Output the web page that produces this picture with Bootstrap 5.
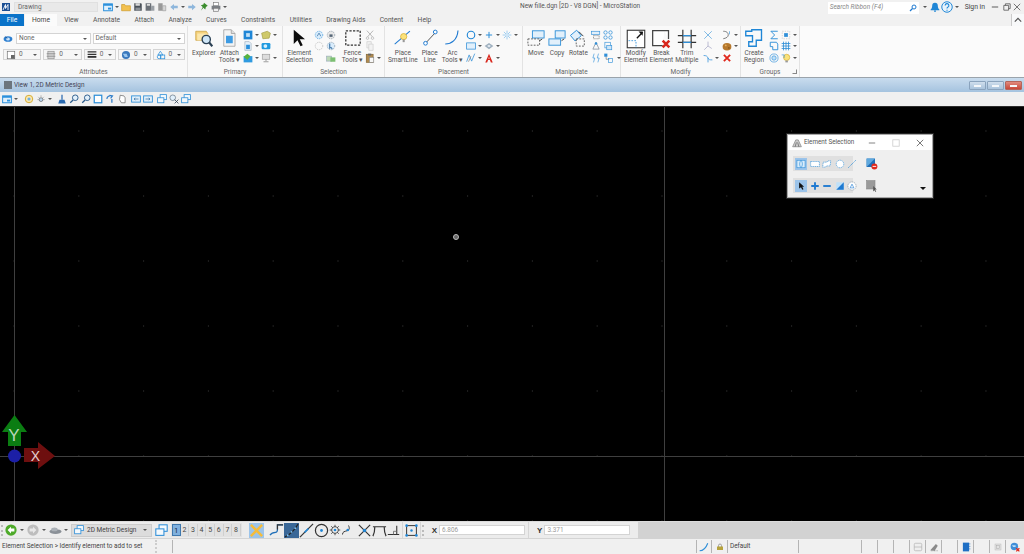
<!DOCTYPE html>
<html lang="en">
<head>
<meta charset="UTF-8" />
<title>New fille.dgn [2D - V8 DGN] - MicroStation</title>
<link href="https://cdn.jsdelivr.net/npm/bootstrap@5.3.0/dist/css/bootstrap.min.css" rel="stylesheet" />
<style>
  html, body { height: 554px; overflow: hidden; }
  body { width: 1024px; background: #000; font-family: Roboto, "Liberation Sans", sans-serif; font-size: 6.5px; line-height: 7px; color: #555; }
  svg { display: block; flex: none; }
  .ic { width: 10px; height: 10px; }
  .ic8 { width: 8px; height: 8px; }
  .ic12 { width: 12px; height: 12px; }
  .ic13 { width: 13px; height: 13px; }
  .ic15 { width: 15px; height: 15px; }
  .ic18 { width: 18px; height: 18px; }
  .ic20 { width: 20px; height: 20px; }
  .car { width: 0; height: 0; flex: none; border-left: 2px solid transparent; border-right: 2px solid transparent; border-top: 2.5px solid #555; }
  .gl-1 { margin-left: 1px; }
  .gl-2 { margin-left: 2px; }
  .gl-3 { margin-left: 3px; }
  .gl-4 { margin-left: 4px; }
  .gl-6 { margin-left: 6px; }

  /* title bar */
  .app-title { height: 14px; background: #f1f1f1; }
  .logo-ic { margin-left: 2px; }
  .qat-combo { width: 84px; height: 10px; margin: 0 5px 0 4px; padding: 0 3px; background: #e9e9e9; border: 1px solid #e0e0e0; color: #666; }
  .qat-gap { gap: 2px; }
  .doc-name { left: 520px; top: 2px; font-size: 6.5px; line-height: 9px; color: #555; }
  .search-box { width: 91px; height: 12px; margin-top: 1px; padding: 0 2px; background: #fff; color: #888; font-style: italic; }
  .signin { font-size: 6.8px; color: #444; }
  .title-end { margin-right: 3px; }

  /* ribbon tabs */
  .tab-row { height: 12px; background: #f1f1f1; padding: 0; border: 0; flex-wrap: nowrap; }
  .tab-row .nav-link { padding: 0 7.2px; margin: 0; height: 12px; border: 0; border-radius: 0; font-size: 6.7px; line-height: 12px; color: #555; background: none; }
  .tab-row .nav-link.active { background: #fbfbfb; color: #444; padding: 0 7px; margin-left: 1px; }
  .tab-row .nav-link.tab-file { background: #0a73c9; color: #fff; width: 24px; padding: 0; text-align: center; }
  .ribbon-up { width: 13px; height: 12px; border-left: 1px solid #ccc; }

  /* ribbon */
  .ribbon { height: 52px; background: #fbfbfb; border-bottom: 1px solid #9aa3ab; }
  .rb-group { height: 51px; background: #f9f9f9; border-right: 1px solid #e3e3e3; }
  .rb-body { height: 42px; }
  .rb-name { height: 9px; line-height: 8px; text-align: center; color: #666; position: relative; }
  .g-attr { width: 187px; padding: 7px 2px 0 3px; }
  .g-prim { width: 94px; padding-left: 4px; gap: 3px; }
  .g-sel { width: 101px; padding-left: 3px; }
  .g-place { width: 137px; padding-left: 3px; gap: 3px; }
  .g-manip { width: 97px; padding-left: 4px; gap: 3px; }
  .g-mod { width: 119px; padding-left: 3px; gap: 2px; }
  .g-grp { width: 58px; padding-left: 3px; gap: 5px; }
  .big-btn { text-align: center; white-space: nowrap; color: #555; }
  .big-ico { height: 24px; padding-top: 3px; display: flex; justify-content: center; }
  .mg { display: grid; grid-auto-flow: column; grid-template-rows: repeat(3, 11.5px); column-gap: 2px; padding-top: 3px; align-items: center; height: 38px; }
  .cell { display: flex; align-items: center; gap: 2px; }
  .combo { height: 11px; padding: 0 3px 0 2px; background: #fff; border: 1px solid #d4d4d4; color: #666; display: flex; align-items: center; justify-content: space-between; }
  .c-none { width: 75px; margin-left: 3px; }
  .c-default { width: 93px; margin-left: 2px; }
  .attr-row2 { margin-top: 5px; gap: 2px; }
  .c-sm { width: 39px; gap: 3px; justify-content: flex-start; background: #f6f6f6; }
  .c-nr { width: 33px; }
  .c-sm .car { margin-left: auto; }
  .launcher { position: absolute; right: 2px; top: 1px; width: 5px; height: 5px; border: 1px solid #888; border-top-color: transparent; border-left-color: transparent; }

  /* view window */
  .view-title { height: 14px; background: linear-gradient(#c9dcee, #a5c3df); color: #445; }
  .view-title .view-name { font-size: 6.4px; }
  .win-btns { margin-right: 1px; }
  .win-btn { width: 17px; height: 9px; margin-right: 1px; border: 1px solid #8aa3bd; border-radius: 1px; background: linear-gradient(#cfdeed, #a9c3dc); }
  .win-btn.win-x { background: linear-gradient(#e08a7e, #c8483a); border-color: #b5665c; }
  .win-btn i { display: block; width: 7px; height: 2px; margin: 3px auto 0; background: #f4f7fa; border: 0; }
  .view-bar { height: 14px; background: #f0f0f0; padding-left: 2px; gap: 2px; }
  .canvas-area {
    height: 415px; position: relative; background-color: #000; border-top: 1px solid #2c2c2c;
    background-image: radial-gradient(circle, #3d3d3d .6px, transparent 1px);
    background-size: 64.8px 65px; background-position: -18.4px -8.5px;
  }
  .cross-v { position: absolute; top: 0; bottom: 0; width: 1px; background: #3f3f3f; }
  .cross-h { position: absolute; left: 0; right: 0; top: 349px; height: 1px; background: #3f3f3f; }
  .cv-a { left: 14px; }
  .cv-b { left: 664px; }
  .cursor-dot { position: absolute; left: 453px; top: 127px; width: 6px; height: 6px; border-radius: 50%; background: #666; border: 1px solid #bbb; }
  .triad { position: absolute; left: 0; top: 307px; width: 60px; height: 66px; }

  /* element selection dialog */
  .sel-dialog { position: absolute; left: 787px; top: 27px; width: 146px; height: 64px; background: #efefef; border: 1px solid #a8a8a8; box-shadow: 0 0 0 1px #222; }
  .sel-head { height: 15px; background: #fff; padding: 0 8px 0 4px; color: #555; }
  .sel-name { font-size: 6.3px; }
  .sel-strip { width: 60px; height: 15px; padding: 0 2px; gap: 2.5px; background: #e0e0e0; }
  .sel-on { background: #9cc4ea; padding: 1px; }
  .sel-rows { padding: 6px 0 0 5px; }
  .sel-row { height: 15px; margin-bottom: 7px; position: relative; }
  .sel-side { margin-left: 13px; }
  .sel-drop { position: absolute; right: 6px; top: 9px; border-left-width: 3px; border-right-width: 3px; border-top: 3px solid #111; }

  /* bottom bars */
  .tool-bar { height: 18px; background: #ececec; border-top: 1px solid #dcdcdc; border-bottom: 1px solid #d4d4d4; }
  .view-combo { width: 81px; height: 13px; margin-left: 3px; padding: 0 4px 0 2px; background: #dcdcdc; border: 1px solid #ccc; color: #444; gap: 3px; }
  .view-nums { height: 14px; background: #e2e2e2; margin: 0 7px 0 3px; padding: 0 1px; }
  .view-num { width: 8.6px; height: 12px; line-height: 12px; font-size: 7px; text-align: center; color: #444; border-right: 1px solid #cfcfcf; }
  .view-num.on { background: #7fb0de; border: 1px solid #3f78ad; color: #123; }
  .snap-x { background: #9cc4ea; padding: 0; height: 15px; margin-right: 5px; }
  .snap-on { background: #3a6797; padding: 0; height: 15px; }
  .tb-sep { width: 1px; height: 16px; background: #d6d6d6; }
  .grip { width: 2px; height: 11px; margin: 0 2px 0 1px; border-left: 2px dotted #bbb; }
  .coord-label { font-size: 8px; font-weight: 700; color: #333; font-family: "Liberation Sans", sans-serif; }
  .coord-input.form-control { width: 86px; height: 10px; min-height: 0; margin-left: 2px; padding: 0 2px; border: 1px solid #d4d4d4; border-radius: 0; background: #fff; font-size: 6.4px; line-height: 8px; color: #999; box-shadow: none; }
  .tb-rest { flex: 1 1 0; height: 17px; background: #d2d2d2; }
  .status-bar { height: 15px; background: #f0f0f0; color: #444; font-size: 6.4px; }
  .st-cell { height: 13px; border-right: 1px solid #b4b4b4; display: flex; align-items: center; justify-content: center; flex: none; }
  .st-msg { width: 157px; padding-left: 2px; justify-content: flex-start; border-right: 2px dotted #ccc; }
  .st-16 { width: 16px; }
  .st-15 { width: 15px; }
  .st-wide { width: 524px; }
  .st-def { width: 71px; padding-left: 2px; justify-content: flex-start; }
  .st-63 { width: 63px; }
</style>
</head>
<body class="d-flex flex-column">

<svg width="0" height="0" class="position-absolute">
  <defs>
    <symbol id="logo" viewBox="0 0 16 16"><rect width="16" height="16" fill="#1c4f93"/><path d="M2 14 7 3v8l5-8v11" fill="none" stroke="#fff" stroke-width="1.8"/></symbol>
    <symbol id="view" viewBox="0 0 16 16"><rect x="1" y="3" width="14" height="11" fill="#dff0fd" stroke="#2b90dc" stroke-width="1.6"/><rect x="1" y="3" width="14" height="3" fill="#2b90dc"/><rect x="8" y="9" width="5" height="3" fill="#2b90dc"/></symbol>
    <symbol id="folder" viewBox="0 0 16 16"><path d="M1 4h5l1 2h8v8H1z" fill="#f2c04f" stroke="#c99422"/></symbol>
    <symbol id="disk" viewBox="0 0 16 16"><path d="M2 2h11l1 1v11H2z" fill="#4a5058"/><rect x="4" y="2" width="7" height="4" fill="#d8d8d8"/><rect x="4" y="9" width="8" height="5" fill="#8b9096"/></symbol>
    <symbol id="disk2" viewBox="0 0 16 16"><path d="M1 2h9v12H1z" fill="#6b7077"/><rect x="3" y="3" width="5" height="3" fill="#ddd"/><path d="M10 6h5v8h-6" fill="#9ba0a6"/></symbol>
    <symbol id="disk3" viewBox="0 0 16 16"><path d="M2 2h7v12H2z" fill="#999"/><path d="M9 6h5v8H9z" fill="#d5d5d5" stroke="#999"/></symbol>
    <symbol id="back" viewBox="0 0 16 16"><path d="M8 3 2 8l6 5v-3h6V6H8z" fill="#8fb7dc"/></symbol>
    <symbol id="fwd" viewBox="0 0 16 16"><path d="m8 3 6 5-6 5v-3H2V6h6z" fill="#8fb7dc"/></symbol>
    <symbol id="pin" viewBox="0 0 16 16"><path d="M8 1l6 5-3 2-1 4-3-3-4 5 3-6-3-3 4-1z" fill="#3b8d2d"/></symbol>
    <symbol id="printer" viewBox="0 0 16 16"><rect x="4" y="1" width="8" height="5" fill="#fff" stroke="#777"/><rect x="1" y="6" width="14" height="6" fill="#7b7f84"/><rect x="4" y="10" width="8" height="5" fill="#eee" stroke="#777"/></symbol>
    <symbol id="search" viewBox="0 0 16 16"><circle cx="10" cy="6" r="4" fill="none" stroke="#1f7ad1" stroke-width="2"/><path d="M7 9l-5 5" stroke="#1f7ad1" stroke-width="2.4"/></symbol>
    <symbol id="bell" viewBox="0 0 16 16"><path d="M8 1c3 0 4.500 2 4.500 5s1 5 2.500 6v1H1v-1c1.500-1 2.500-3 2.500-6S5 1 8 1z" fill="#1f86d6"/><circle cx="8" cy="14.500" r="1.500" fill="#1f86d6"/></symbol>
    <symbol id="layers" viewBox="0 0 16 16"><ellipse cx="8" cy="8" rx="7" ry="4.500" fill="#2d7fd0"/><ellipse cx="8" cy="8" rx="3" ry="2.500" fill="#cfe6fb"/><path d="M3 4l4 3" stroke="#173e70"/></symbol>
    <symbol id="lvl1" viewBox="0 0 16 16"><rect x="2" y="2" width="12" height="12" fill="#fff" stroke="#666"/><rect x="8" y="8" width="6" height="6" fill="#666"/></symbol>
    <symbol id="lvl2" viewBox="0 0 16 16"><rect x="3" y="2" width="10" height="12" fill="#d4d4d4" stroke="#888"/><path d="M1 6h14M1 10h14" stroke="#777"/></symbol>
    <symbol id="lvl3" viewBox="0 0 16 16"><path d="M1 3h14M1 7h14" stroke="#333" stroke-width="2"/><path d="M1 11h14" stroke="#333" stroke-width="3"/></symbol>
    <symbol id="lvl4" viewBox="0 0 16 16"><circle cx="8" cy="8" r="6.500" fill="#3a78bd"/><path d="M3 6h6l2 5H6z" fill="#9cc7ee"/></symbol>
    <symbol id="lvl5" viewBox="0 0 16 16"><path d="M7 2l4 6H3z" fill="none" stroke="#2b90dc" stroke-width="1.2"/><rect x="7" y="8" width="7" height="6" fill="none" stroke="#2b90dc" stroke-width="1.2"/><circle cx="5" cy="11" r="3" fill="none" stroke="#2b90dc" stroke-width="1.2"/></symbol>
    <symbol id="explorer" viewBox="0 0 24 24"><path d="M1 3h14l2 3v9H1z" fill="#f5d27c" stroke="#c9a042"/><path d="M3 6h14v9H3z" fill="#fbe7ae"/><circle cx="15" cy="14" r="5.500" fill="#cfe6f7" stroke="#2a4054" stroke-width="1.8"/><path d="m19 18 4 5" stroke="#2a4054" stroke-width="2.8"/></symbol>
    <symbol id="attach" viewBox="0 0 20 24"><path d="M3 1h10l5 5v17H3z" fill="#f4f4f4" stroke="#9a9a9a"/><path d="M13 1v5h5" fill="#ddd" stroke="#9a9a9a"/><path d="M6 9h9v10H6z" fill="#3d9be3"/></symbol>
    <symbol id="m-ref" viewBox="0 0 16 16"><rect x="1" y="1" width="14" height="14" fill="#1f86d6"/><rect x="5" y="5" width="6" height="6" fill="#bfe0f8"/></symbol>
    <symbol id="m-raster" viewBox="0 0 16 16"><path d="M1 5l9-3 5 3-2 8-10 1z" fill="#cfc96a" stroke="#9f9a42"/></symbol>
    <symbol id="m-doc" viewBox="0 0 16 16"><path d="M3 1h7l3 3v11H3z" fill="#e7f2fb" stroke="#9ab"/><rect x="5" y="6" width="6" height="7" fill="#2b90dc"/></symbol>
    <symbol id="m-cloud" viewBox="0 0 16 16"><rect x="1" y="3" width="14" height="10" rx="2" fill="#1f9ae0"/><circle cx="7" cy="8" r="3" fill="#d7effc"/></symbol>
    <symbol id="m-img" viewBox="0 0 16 16"><rect x="1" y="5" width="14" height="10" fill="#2f9ae0"/><path d="M1 6l6-5 5 4-5 6z" fill="#58b33f"/></symbol>
    <symbol id="m-grey" viewBox="0 0 16 16"><rect x="2" y="2" width="12" height="8" fill="#ddd" stroke="#999"/><path d="M8 10v3M4 14h8" stroke="#999" stroke-width="1.500"/></symbol>
    <symbol id="arrow" viewBox="0 0 24 24"><path d="M5 1v19l5-5 4 8 3-1.500-4-8h7z" fill="#0c0c0c"/></symbol>
    <symbol id="c-dash" viewBox="0 0 16 16"><circle cx="8" cy="8" r="6" fill="#d9ecfb" stroke="#2b90dc" stroke-dasharray="2 1.500"/><path d="M5 10l3-5 3 5" fill="none" stroke="#1b5b93"/></symbol>
    <symbol id="c-lock" viewBox="0 0 16 16"><circle cx="8" cy="8" r="6" fill="#e8e8e8" stroke="#789" stroke-dasharray="2 1.500"/><rect x="5.500" y="7" width="5" height="4" fill="#567"/></symbol>
    <symbol id="c-plain" viewBox="0 0 16 16"><circle cx="8" cy="8" r="6" fill="none" stroke="#aaa" stroke-dasharray="2 1.500"/></symbol>
    <symbol id="c-sel" viewBox="0 0 16 16"><circle cx="8" cy="8" r="6" fill="#d9ecfb" stroke="#789" stroke-dasharray="2 1.500"/><path d="M6 4v8l2-2 2 3" fill="none" stroke="#1b5b93" stroke-width="1.500"/></symbol>
    <symbol id="c-green" viewBox="0 0 16 16"><rect x="1" y="5" width="8" height="8" fill="#bcd8b5" stroke="#9ab"/><rect x="7" y="7" width="8" height="7" fill="#7cbf72"/></symbol>
    <symbol id="fence" viewBox="0 0 20 20"><rect x="2" y="2" width="16" height="16" fill="none" stroke="#333" stroke-width="1.400" stroke-dasharray="2.500 1.500"/></symbol>
    <symbol id="cut" viewBox="0 0 16 16"><path d="M3 1l9 10M13 1 4 11" stroke="#aaa" stroke-width="1.300"/><circle cx="4" cy="13" r="2" fill="none" stroke="#aaa"/><circle cx="12" cy="13" r="2" fill="none" stroke="#aaa"/></symbol>
    <symbol id="copydoc" viewBox="0 0 16 16"><path d="M3 1h7v10H3z" fill="#f2f2f2" stroke="#ccc"/><path d="M6 5h7v10H6z" fill="#f2f2f2" stroke="#ccc"/></symbol>
    <symbol id="paste" viewBox="0 0 16 16"><rect x="2" y="2" width="11" height="13" fill="#b08b50" stroke="#7d6130"/><rect x="5" y="1" width="5" height="3" fill="#666"/><rect x="7" y="7" width="7" height="8" fill="#f7f7f7" stroke="#888"/></symbol>
    <symbol id="smartline" viewBox="0 0 26 24"><path d="M1 21 23 2" stroke="#1f7ad1" stroke-width="1.500"/><circle cx="14" cy="10" r="4.500" fill="#fbe27b" stroke="#d2a92c"/><rect x="12.500" y="14" width="3" height="4" fill="#999"/></symbol>
    <symbol id="pline" viewBox="0 0 20 24"><path d="M4 19 17 5" stroke="#555" stroke-width="1.300"/><circle cx="4" cy="19" r="2.500" fill="#fff" stroke="#1f7ad1" stroke-width="1.300"/><circle cx="17" cy="4" r="2.500" fill="#fff" stroke="#1f7ad1" stroke-width="1.300"/></symbol>
    <symbol id="parc" viewBox="0 0 20 24"><path d="M1 20c8 0 16-5 17-18" fill="none" stroke="#1f7ad1" stroke-width="1.500"/></symbol>
    <symbol id="circle" viewBox="0 0 16 16"><circle cx="8" cy="8" r="6" fill="none" stroke="#1f86d6" stroke-width="1.800"/></symbol>
    <symbol id="plus" viewBox="0 0 16 16"><path d="M8 3v10M3 8h10" stroke="#2f8fd8" stroke-width="1.600"/></symbol>
    <symbol id="spark" viewBox="0 0 16 16"><path d="M8 1v14M1 8h14M3 3l10 10M13 3 3 13" stroke="#6bb3ea"/><circle cx="8" cy="8" r="2.500" fill="#cfe6f7"/></symbol>
    <symbol id="rect" viewBox="0 0 16 16"><rect x="1" y="3" width="14" height="10" fill="#e2f0fb" stroke="#2f8fd8" stroke-width="1.200"/></symbol>
    <symbol id="hatch" viewBox="0 0 16 16"><path d="M8 3l7 5-7 5-7-5z" fill="#9fb0bf"/><path d="M8 6l3 2-3 2-3-2z" fill="#e7eef5"/></symbol>
    <symbol id="zig" viewBox="0 0 16 16"><path d="M1 14 5 3l4 10 5-12" fill="none" stroke="#2f8fd8" stroke-width="1.200"/><path d="M4 14 8 5" stroke="#777"/></symbol>
    <symbol id="bigA" viewBox="0 0 16 16"><path d="M8 1 2 15h3l1.500-4h3l1.500 4h3zM7 9l1-3 1 3z" fill="#d8261c" fill-rule="evenodd"/></symbol>
    <symbol id="move" viewBox="0 0 20 20"><rect x="6" y="2" width="13" height="8" fill="#e2f0fb" stroke="#2f8fd8"/><rect x="1" y="11" width="13" height="7" fill="none" stroke="#555" stroke-dasharray="2 1.500"/><path d="M14 13l3-2" stroke="#333"/></symbol>
    <symbol id="copy" viewBox="0 0 20 20"><rect x="8" y="2" width="11" height="8" fill="#e2f0fb" stroke="#2f8fd8"/><rect x="1" y="11" width="13" height="7" fill="#e2f0fb" stroke="#2f8fd8"/><path d="M15 13l3-2" stroke="#333"/></symbol>
    <symbol id="rotate" viewBox="0 0 20 20"><rect x="3" y="3" width="9" height="8" transform="rotate(-40 8 7)" fill="#e2f0fb" stroke="#2f8fd8"/><rect x="8" y="11" width="9" height="8" fill="none" stroke="#555" stroke-dasharray="2 1.500"/><path d="M11 3l5 5" stroke="#333"/></symbol>
    <symbol id="m-stack" viewBox="0 0 16 16"><rect x="1" y="2" width="13" height="5" fill="#e2f0fb" stroke="#2f8fd8"/><rect x="4" y="9" width="9" height="5" fill="none" stroke="#666" stroke-dasharray="2 1"/></symbol>
    <symbol id="m-four" viewBox="0 0 16 16"><g fill="none" stroke="#2f8fd8" stroke-width="1.200"><circle cx="4" cy="4" r="2.700"/><circle cx="12" cy="4" r="2.700"/><circle cx="4" cy="12" r="2.700"/><circle cx="12" cy="12" r="2.700"/></g></symbol>
    <symbol id="m-tri" viewBox="0 0 16 16"><path d="M8 2l5 11H3z" fill="none" stroke="#678"/><circle cx="8" cy="4" r="2" fill="#2f8fd8"/></symbol>
    <symbol id="m-box" viewBox="0 0 16 16"><rect x="3" y="2" width="9" height="9" fill="none" stroke="#2f8fd8"/><rect x="6" y="7" width="8" height="7" fill="#cfe6f7" stroke="#2f8fd8"/></symbol>
    <symbol id="m-wave" viewBox="0 0 16 16"><path d="M5 1 3 8l3 0-2 7M12 1l-2 7 3 0-2 7" fill="none" stroke="#2f8fd8"/></symbol>
    <symbol id="m-step" viewBox="0 0 16 16"><rect x="2" y="1" width="5" height="5" fill="#2f8fd8"/><path d="M5 6v4h5" fill="none" stroke="#666"/><rect x="9" y="9" width="6" height="6" fill="none" stroke="#2f8fd8"/></symbol>
    <symbol id="modify" viewBox="0 0 24 24"><rect x="1.500" y="1.500" width="21" height="21" fill="#fff" stroke="#333" stroke-width="1.300"/><path d="M3 14h9v9" fill="none" stroke="#2f8fd8" stroke-dasharray="2 1.500"/><path d="M13 11l7-7" stroke="#111" stroke-width="1.600"/><path d="M20 3l0 5-5-5z" fill="#111"/></symbol>
    <symbol id="break" viewBox="0 0 24 24"><path d="M16 2H2v18h12M21 12V2h-5" fill="#fff" stroke="#444" stroke-width="1.500"/><path d="M14 14l8 8M22 14l-8 8" stroke="#d8261c" stroke-width="3"/></symbol>
    <symbol id="trim" viewBox="0 0 24 24"><path d="M7 1v22M17 1v22" stroke="#333" stroke-width="1.400"/><path d="M1 8h22M1 16h22" stroke="#333" stroke-width="1.400"/><path d="M7 8h10M7 16h10" stroke="#2f8fd8" stroke-width="1.400"/></symbol>
    <symbol id="xcross" viewBox="0 0 16 16"><path d="M2 2l12 12M14 2 2 14" stroke="#5aa5de" stroke-width="1.200"/></symbol>
    <symbol id="ymerge" viewBox="0 0 16 16"><path d="M8 8 2 14M8 8l6 4M8 8V1" stroke="#99b" /></symbol>
    <symbol id="ybranch" viewBox="0 0 16 16"><path d="M1 4c4 0 6 1 7 4s3 3 7 3M8 8v7" fill="none" stroke="#2f8fd8" stroke-width="1.200"/></symbol>
    <symbol id="curvefn" viewBox="0 0 16 16"><path d="M2 2c6 0 8 3 8 6s-3 5-8 6" fill="none" stroke="#555" stroke-width="1.200"/><path d="M12 2v5" stroke="#2f8fd8"/></symbol>
    <symbol id="potato" viewBox="0 0 16 16"><ellipse cx="8" cy="9" rx="7" ry="6" fill="#b6782d"/><circle cx="6" cy="7" r="1.500" fill="#e7b25e"/><circle cx="11" cy="11" r="1.500" fill="#8a5a1f"/></symbol>
    <symbol id="redx" viewBox="0 0 16 16"><path d="M3 3l10 10M13 3 3 13" stroke="#e0281c" stroke-width="3"/></symbol>
    <symbol id="region" viewBox="0 0 24 24"><path d="M9 1h13v14h-7v8H5v-6h5V9H1V3h8z" fill="none" stroke="#1f86d6" stroke-width="1.800"/></symbol>
    <symbol id="sigma" viewBox="0 0 16 16"><path d="M14 2H3l6 6-6 6h11" fill="none" stroke="#2f8fd8" stroke-width="1.500"/></symbol>
    <symbol id="dots" viewBox="0 0 16 16"><rect x="2" y="2" width="12" height="12" fill="none" stroke="#bbb" stroke-dasharray="2 2"/><rect x="5" y="5" width="6" height="6" fill="#2f8fd8"/></symbol>
    <symbol id="s-box" viewBox="0 0 16 16"><path d="M2 2h10l2 3v9H6V9H2z" fill="none" stroke="#2f8fd8" stroke-width="1.500"/></symbol>
    <symbol id="gridb" viewBox="0 0 16 16"><path d="M4 1v14M8 1v14M12 1v14M1 4h14M1 8h14M1 12h14" stroke="#2f8fd8" stroke-width="1.300"/></symbol>
    <symbol id="target" viewBox="0 0 16 16"><circle cx="8" cy="8" r="6.500" fill="none" stroke="#2f8fd8"/><circle cx="8" cy="8" r="3.500" fill="#bfe0f8" stroke="#2f8fd8"/></symbol>
    <symbol id="bulb" viewBox="0 0 16 16"><circle cx="9" cy="7" r="5" fill="#fae27a" stroke="#d2a92c"/><rect x="7" y="12" width="4" height="3" fill="#999"/><path d="M1 3h4v5" fill="none" stroke="#2f8fd8"/></symbol>
    <symbol id="fit" viewBox="0 0 16 16"><rect x="2" y="2" width="12" height="12" fill="#fff" stroke="#2f8fd8" stroke-width="2"/></symbol>
    <symbol id="zoomg" viewBox="0 0 16 16"><circle cx="10" cy="6" r="4.500" fill="#e2f0fb" stroke="#2a5a8a" stroke-width="1.500"/><path d="M6.500 9.500 2 14" stroke="#2a5a8a" stroke-width="2"/></symbol>
    <symbol id="broom" viewBox="0 0 16 16"><path d="M8 1v8" stroke="#2a6ab0" stroke-width="2"/><path d="M4 9h8l2 6H2z" fill="#2a6ab0"/></symbol>
    <symbol id="sun" viewBox="0 0 16 16"><circle cx="8" cy="9" r="3" fill="#bcd8f2" stroke="#555"/><path d="M8 2v3M2 9h3M11 9h3M3.500 4.500l2 2M12.500 4.500l-2 2" stroke="#999"/></symbol>
    <symbol id="ball" viewBox="0 0 16 16"><circle cx="8" cy="8" r="6" fill="#fbe7ae" stroke="#d2a92c" stroke-width="1.500"/><circle cx="8" cy="8" r="2.500" fill="#6fb0e4"/></symbol>
    <symbol id="hand" viewBox="0 0 16 16"><path d="M5 2l6 1 2 3v8H7L4 9z" fill="#fff" stroke="#555"/></symbol>
    <symbol id="spin" viewBox="0 0 16 16"><path d="M3 8c0-4 4-6 8-5M7 2l5 1-3 4" fill="none" stroke="#2a7ac8" stroke-width="1.800"/><path d="M11 8v6" stroke="#2a7ac8" stroke-width="2"/></symbol>
    <symbol id="prevv" viewBox="0 0 16 16"><rect x="1" y="3" width="14" height="10" fill="#e2f0fb" stroke="#2f8fd8" stroke-width="1.400"/><path d="M12 8H5m2-2L5 8l2 2" fill="none" stroke="#1b5b93"/></symbol>
    <symbol id="nextv" viewBox="0 0 16 16"><rect x="1" y="3" width="14" height="10" fill="#e2f0fb" stroke="#2f8fd8" stroke-width="1.400"/><path d="M4 8h7m-2-2 2 2-2 2" fill="none" stroke="#1b5b93"/></symbol>
    <symbol id="twov" viewBox="0 0 16 16"><rect x="5" y="1" width="10" height="8" fill="#f4f9fd" stroke="#2f8fd8" stroke-width="1.300"/><rect x="1" y="6" width="10" height="8" fill="#f4f9fd" stroke="#2f8fd8" stroke-width="1.300"/></symbol>
    <symbol id="zoomx" viewBox="0 0 16 16"><circle cx="6" cy="6" r="4.500" fill="#e2f0fb" stroke="#567"/><path d="M9 9l6 6M15 9l-6 6" stroke="#345" stroke-width="1.300"/></symbol>
    <symbol id="greenb" viewBox="0 0 16 16"><circle cx="8" cy="8" r="7.500" fill="#4eaa2a"/><path d="M8 3.500 3.500 8 8 12.500V10h4.500V6H8z" fill="#fff"/></symbol>
    <symbol id="greyb" viewBox="0 0 16 16"><circle cx="8" cy="8" r="7.500" fill="#bdbdbd"/><path d="m8 3.500 4.500 4.500L8 12.500V10H3.500V6H8z" fill="#e8e8e8"/></symbol>
    <symbol id="cloudg" viewBox="0 0 24 14"><ellipse cx="12" cy="9" rx="11" ry="4.500" fill="#8a9097"/><ellipse cx="10" cy="5" rx="6" ry="3.500" fill="#aab0b6"/></symbol>
    <symbol id="snapx" viewBox="0 0 16 16"><path d="M2 2l12 12M14 2 2 14" stroke="#f6bc3a" stroke-width="2.600"/></symbol>
    <symbol id="t-step" viewBox="0 0 16 16"><path d="M1 13c2-3 4-3 6-3s2-1 2-3V2h6" fill="none" stroke="#1f6fb8" stroke-width="1.300"/><path d="M9 7V2h6" fill="none" stroke="#333" stroke-width="1.300"/></symbol>
    <symbol id="t-dot" viewBox="0 0 16 16"><path d="M1 15C5 13 11 8 15 1" fill="none" stroke="#222" stroke-width="1.300"/><circle cx="4" cy="13" r="1" fill="#7fc2f2"/><circle cx="8" cy="9.500" r="1" fill="#7fc2f2"/><circle cx="12" cy="5.500" r="1" fill="#7fc2f2"/></symbol>
    <symbol id="t-line" viewBox="0 0 16 16"><path d="M1 15 15 1" stroke="#333" stroke-width="1.300"/><path d="M6 10l4-4" stroke="#1f86d6" stroke-width="1.600"/></symbol>
    <symbol id="t-circ" viewBox="0 0 16 16"><circle cx="8" cy="8" r="6.500" fill="none" stroke="#333" stroke-width="1.300"/><circle cx="8" cy="8" r="1.500" fill="#1f86d6"/></symbol>
    <symbol id="t-gear" viewBox="0 0 16 16"><circle cx="8" cy="8" r="4.500" fill="none" stroke="#444" stroke-width="1.200"/><circle cx="8" cy="8" r="1.800" fill="#1f86d6"/><path d="M8 1v3M8 12v3M1 8h3M12 8h3M3 3l2 2M11 11l2 2M13 3l-2 2M5 11l-2 2" stroke="#444" stroke-width="1.200"/></symbol>
    <symbol id="t-curve" viewBox="0 0 16 16"><path d="M2 14c0-4 3-4 6-5s4-3 2-7" fill="none" stroke="#333" stroke-width="1.300"/><circle cx="9" cy="8" r="1.800" fill="#1f86d6"/></symbol>
    <symbol id="t-x" viewBox="0 0 16 16"><path d="M2 2l12 12M14 2 2 14" stroke="#333" stroke-width="1.300"/><circle cx="8" cy="8" r="1.800" fill="#1f86d6"/></symbol>
    <symbol id="t-arc" viewBox="0 0 16 16"><path d="M1 4h14M3 4c0 5-1 8-2 10M13 4c0 5 1 8 2 10" fill="none" stroke="#333" stroke-width="1.300"/></symbol>
    <symbol id="t-perp" viewBox="0 0 16 16"><path d="M1 13h14M12 2v11" stroke="#333" stroke-width="1.300"/><path d="M8 13V9h4" fill="none" stroke="#666"/></symbol>
    <symbol id="t-box" viewBox="0 0 16 16"><rect x="2" y="2" width="12" height="12" fill="none" stroke="#333" stroke-width="1.200"/><circle cx="8" cy="8" r="1.500" fill="#1f86d6"/><g fill="#1f86d6"><circle cx="2" cy="2" r="1.600"/><circle cx="14" cy="2" r="1.600"/><circle cx="2" cy="14" r="1.600"/><circle cx="14" cy="14" r="1.600"/></g></symbol>
    <symbol id="s-line" viewBox="0 0 16 16"><path d="M1 14c5 0 10-4 13-12" fill="none" stroke="#2f8fd8" stroke-width="1.800"/></symbol>
    <symbol id="s-lock" viewBox="0 0 16 16"><path d="M5 8V5a3 3 0 0 1 6 0v3" fill="none" stroke="#888" stroke-width="1.500"/><rect x="2" y="7" width="12" height="7" fill="#b7a33c"/></symbol>
    <symbol id="s-sheet" viewBox="0 0 16 16"><rect x="2" y="2" width="12" height="12" rx="2" fill="#eee" stroke="#aaa"/><path d="M2 8h12" stroke="#aaa"/></symbol>
    <symbol id="s-tool" viewBox="0 0 16 16"><path d="M2 13 11 3l3 3-5 8z" fill="#8a8a8a"/><path d="M3 14h11" stroke="#777" stroke-dasharray="1.500 1"/></symbol>
    <symbol id="s-book" viewBox="0 0 16 16"><rect x="3" y="1" width="10" height="14" fill="#1f6fc4"/><path d="M13 3h2M13 7h2M13 11h2" stroke="#1f6fc4"/></symbol>
    <symbol id="s-sq" viewBox="0 0 16 16"><rect x="2" y="2" width="12" height="12" fill="#e2e2e2" stroke="#bbb"/><rect x="5" y="5" width="6" height="6" fill="none" stroke="#aaa"/></symbol>
    <symbol id="s-globe" viewBox="0 0 16 16"><circle cx="7" cy="7" r="6" fill="#3f8ed8"/><path d="M3 5h6v3H5z" fill="#bcdcf5"/><path d="M10 10l5 5M15 10l-5 5" stroke="#e0281c" stroke-width="2"/></symbol>
    <symbol id="d-icon" viewBox="0 0 16 16"><path d="M1 14 6 3h4l5 11z" fill="#ccc" stroke="#777"/><path d="M5 14l2-7M11 14 9 7" stroke="#555"/></symbol>
    <symbol id="d-method" viewBox="0 0 16 16"><rect x="1.500" y="2" width="13" height="12" fill="#d9ecfb" stroke="#2f8fd8"/><path d="M8 2c-3 3-3 9 0 12 3-3 3-9 0-12z" fill="none" stroke="#2f8fd8"/></symbol>
    <symbol id="d-block" viewBox="0 0 16 16"><rect x="1" y="4" width="14" height="8" fill="#fff" stroke="#2f8fd8" stroke-dasharray="2 1"/></symbol>
    <symbol id="d-shape" viewBox="0 0 16 16"><path d="M2 5h6l1-2h5l-1 8H7l-1 2H1z" fill="#fff" stroke="#2f8fd8" stroke-dasharray="2 1"/></symbol>
    <symbol id="d-circ" viewBox="0 0 16 16"><circle cx="8" cy="8" r="6" fill="#fff" stroke="#2f8fd8" stroke-dasharray="2 1"/></symbol>
    <symbol id="d-line" viewBox="0 0 16 16"><path d="M2 14 14 2" stroke="#2f8fd8" stroke-width="1.300" stroke-dasharray="2 1"/></symbol>
    <symbol id="d-cur" viewBox="0 0 16 16"><path d="M5 2v10l3-2 2 4 2-1-2-4h3z" fill="#111"/></symbol>
    <symbol id="d-plus" viewBox="0 0 16 16"><path d="M8 2v12M2 8h12" stroke="#1f7ad1" stroke-width="3"/></symbol>
    <symbol id="d-minus" viewBox="0 0 16 16"><path d="M2 8h12" stroke="#1f7ad1" stroke-width="3"/></symbol>
    <symbol id="d-inv" viewBox="0 0 16 16"><rect x="2" y="2" width="12" height="12" fill="#bfe0f8"/><path d="M14 2v12H2z" fill="#1f7ad1"/></symbol>
    <symbol id="d-all" viewBox="0 0 16 16"><circle cx="8" cy="8" r="6.500" fill="#fff" stroke="#789" stroke-dasharray="2 1"/><path d="M5 11l3-6 3 6z" fill="none" stroke="#1f7ad1"/></symbol>
    <symbol id="d-stop" viewBox="0 0 20 20"><rect x="1" y="1" width="14" height="14" fill="#1f6fb8"/><path d="M1 1h14L1 15z" fill="#5fa8dd"/><circle cx="14" cy="14" r="5" fill="#e0281c"/><path d="M11 14h6" stroke="#fff" stroke-width="1.500"/></symbol>
    <symbol id="d-grey" viewBox="0 0 20 20"><rect x="1" y="1" width="14" height="14" fill="#9a9a9a" stroke="#888"/><path d="M12 10v9l2-2 2 3 1-1-2-3h3z" fill="#555"/></symbol>
  </defs>
</svg>

<header class="app-title d-flex align-items-center position-relative flex-none">
  <svg class="ic8 logo-ic"><use href="#logo"/></svg>
  <div class="qat-combo d-flex align-items-center">Drawing</div>
  <div class="d-flex align-items-center qat-gap">
    <svg class="ic"><use href="#view"/></svg><span class="car"></span>
    <svg class="ic"><use href="#folder"/></svg>
    <svg class="ic"><use href="#disk"/></svg>
    <svg class="ic"><use href="#disk2"/></svg>
    <svg class="ic"><use href="#disk3"/></svg>
    <svg class="ic"><use href="#back"/></svg><span class="car"></span>
    <svg class="ic"><use href="#fwd"/></svg>
    <svg class="ic"><use href="#pin"/></svg>
    <svg class="ic"><use href="#printer"/></svg><span class="car"></span>
  </div>
  <span class="doc-name position-absolute">New fille.dgn [2D - V8 DGN] - MicroStation</span>
  <div class="ms-auto d-flex align-items-center title-end">
    <div class="search-box d-flex align-items-center justify-content-between">Search Ribbon (F4)<svg class="ic8"><use href="#search"/></svg></div>
    <span class="car gl-4"></span>
    <svg class="ic gl-3"><use href="#bell"/></svg>
    <svg class="ic12 gl-1" viewBox="0 0 16 16"><circle cx="8" cy="8" r="7" fill="#e8f3fb" stroke="#1f86d6" stroke-width="1.300"/><path d="M5.500 6a2.500 2.500 0 1 1 3.500 2.300C8.300 8.700 8 9.200 8 10M8 11.500v1.500" fill="none" stroke="#1f86d6" stroke-width="1.500"/></svg>
    <span class="car gl-2"></span>
    <span class="signin gl-6">Sign in</span>
    <svg class="ic8 gl-6" viewBox="0 0 10 10"><path d="M1 5h8" stroke="#555" stroke-width="1.200"/></svg>
    <svg class="ic8 gl-4" viewBox="0 0 10 10"><path d="M1 3h6v6H1zM3 3V1h6v6H7" fill="none" stroke="#555"/></svg>
    <svg class="ic8 gl-2" viewBox="0 0 10 10"><path d="M1 1l8 8M9 1 1 9" stroke="#555"/></svg>
  </div>
</header>

<div class="d-flex tab-wrap">
  <ul class="nav nav-tabs tab-row flex-grow-1">
    <li class="nav-item"><a class="nav-link tab-file" href="#">File</a></li>
    <li class="nav-item"><a class="nav-link active" href="#">Home</a></li>
    <li class="nav-item"><a class="nav-link" href="#">View</a></li>
    <li class="nav-item"><a class="nav-link" href="#">Annotate</a></li>
    <li class="nav-item"><a class="nav-link" href="#">Attach</a></li>
    <li class="nav-item"><a class="nav-link" href="#">Analyze</a></li>
    <li class="nav-item"><a class="nav-link" href="#">Curves</a></li>
    <li class="nav-item"><a class="nav-link" href="#">Constraints</a></li>
    <li class="nav-item"><a class="nav-link" href="#">Utilities</a></li>
    <li class="nav-item"><a class="nav-link" href="#">Drawing Aids</a></li>
    <li class="nav-item"><a class="nav-link" href="#">Content</a></li>
    <li class="nav-item"><a class="nav-link" href="#">Help</a></li>
  </ul>
  <div class="ribbon-up d-flex align-items-center justify-content-center bg-light">
    <svg class="ic8" viewBox="0 0 10 10"><path d="M1 7l4-4 4 4" fill="none" stroke="#555" stroke-width="1.500"/></svg>
  </div>
</div>

<section class="ribbon d-flex">
  <div class="rb-group">
    <div class="rb-body g-attr">
      <div class="d-flex align-items-center">
        <svg class="ic"><use href="#layers"/></svg>
        <div class="combo c-none">None<span class="car"></span></div>
        <div class="combo c-default">Default<span class="car"></span></div>
      </div>
      <div class="d-flex attr-row2">
        <div class="combo c-sm"><svg class="ic"><use href="#lvl1"/></svg>0<span class="car"></span></div>
        <div class="combo c-sm"><svg class="ic"><use href="#lvl2"/></svg>0<span class="car"></span></div>
        <div class="combo c-sm c-nr"><svg class="ic"><use href="#lvl3"/></svg>0<span class="car"></span></div>
        <div class="combo c-sm c-nr"><svg class="ic"><use href="#lvl4"/></svg>0<span class="car"></span></div>
        <div class="combo c-sm c-nr"><svg class="ic"><use href="#lvl5"/></svg>0<span class="car"></span></div>
      </div>
    </div>
    <div class="rb-name">Attributes</div>
  </div>

  <div class="rb-group">
    <div class="rb-body d-flex g-prim">
      <div class="big-btn"><div class="big-ico"><svg class="ic18"><use href="#explorer"/></svg></div>Explorer</div>
      <div class="big-btn"><div class="big-ico"><svg class="ic18"><use href="#attach"/></svg></div>Attach<br>Tools &#9662;</div>
      <div class="mg">
        <div class="cell"><svg class="ic"><use href="#m-ref"/></svg><span class="car"></span></div>
        <div class="cell"><svg class="ic"><use href="#m-doc"/></svg><span class="car"></span></div>
        <div class="cell"><svg class="ic"><use href="#m-img"/></svg><span class="car"></span></div>
        <div class="cell"><svg class="ic"><use href="#m-raster"/></svg><span class="car"></span></div>
        <div class="cell"><svg class="ic"><use href="#m-cloud"/></svg></div>
        <div class="cell"><svg class="ic"><use href="#m-grey"/></svg><span class="car"></span></div>
      </div>
    </div>
    <div class="rb-name">Primary</div>
  </div>

  <div class="rb-group">
    <div class="rb-body d-flex g-sel">
      <div class="big-btn"><div class="big-ico"><svg class="ic18"><use href="#arrow"/></svg></div>Element<br>Selection</div>
      <div class="mg gl-1">
        <svg class="ic"><use href="#c-dash"/></svg>
        <svg class="ic"><use href="#c-plain"/></svg>
        <span></span>
        <svg class="ic"><use href="#c-lock"/></svg>
        <svg class="ic"><use href="#c-sel"/></svg>
        <svg class="ic"><use href="#c-green"/></svg>
      </div>
      <div class="big-btn gl-6"><div class="big-ico"><svg class="ic18"><use href="#fence"/></svg></div>Fence<br>Tools &#9662;</div>
      <div class="mg gl-2">
        <svg class="ic"><use href="#cut"/></svg>
        <svg class="ic"><use href="#copydoc"/></svg>
        <div class="cell"><svg class="ic"><use href="#paste"/></svg><span class="car"></span></div>
      </div>
    </div>
    <div class="rb-name">Selection</div>
  </div>

  <div class="rb-group">
    <div class="rb-body d-flex g-place">
      <div class="big-btn"><div class="big-ico"><svg class="ic18"><use href="#smartline"/></svg></div>Place<br>SmartLine</div>
      <div class="big-btn"><div class="big-ico"><svg class="ic18"><use href="#pline"/></svg></div>Place<br>Line</div>
      <div class="big-btn"><div class="big-ico"><svg class="ic18"><use href="#parc"/></svg></div>Arc<br>Tools &#9662;</div>
      <div class="mg">
        <div class="cell"><svg class="ic"><use href="#circle"/></svg><span class="car"></span></div>
        <div class="cell"><svg class="ic"><use href="#rect"/></svg><span class="car"></span></div>
        <div class="cell"><svg class="ic"><use href="#zig"/></svg><span class="car"></span></div>
        <div class="cell"><svg class="ic"><use href="#plus"/></svg><span class="car"></span></div>
        <div class="cell"><svg class="ic"><use href="#hatch"/></svg><span class="car"></span></div>
        <div class="cell"><svg class="ic"><use href="#bigA"/></svg><span class="car"></span></div>
        <div class="cell"><svg class="ic"><use href="#spark"/></svg><span class="car"></span></div>
      </div>
    </div>
    <div class="rb-name">Placement</div>
  </div>

  <div class="rb-group">
    <div class="rb-body d-flex g-manip">
      <div class="big-btn"><div class="big-ico"><svg class="ic18"><use href="#move"/></svg></div>Move</div>
      <div class="big-btn"><div class="big-ico"><svg class="ic18"><use href="#copy"/></svg></div>Copy</div>
      <div class="big-btn"><div class="big-ico"><svg class="ic18"><use href="#rotate"/></svg></div>Rotate</div>
      <div class="mg">
        <svg class="ic"><use href="#m-stack"/></svg>
        <svg class="ic"><use href="#m-tri"/></svg>
        <svg class="ic"><use href="#m-wave"/></svg>
        <svg class="ic"><use href="#m-four"/></svg>
        <svg class="ic"><use href="#m-box"/></svg>
        <div class="cell"><svg class="ic"><use href="#m-step"/></svg><span class="car gl-2"></span></div>
      </div>
    </div>
    <div class="rb-name">Manipulate</div>
  </div>

  <div class="rb-group">
    <div class="rb-body d-flex g-mod">
      <div class="big-btn"><div class="big-ico"><svg class="ic20"><use href="#modify"/></svg></div>Modify<br>Element</div>
      <div class="big-btn"><div class="big-ico"><svg class="ic20"><use href="#break"/></svg></div>Break<br>Element</div>
      <div class="big-btn"><div class="big-ico"><svg class="ic20"><use href="#trim"/></svg></div>Trim<br>Multiple</div>
      <div class="mg gl-3">
        <svg class="ic"><use href="#xcross"/></svg>
        <svg class="ic"><use href="#ymerge"/></svg>
        <div class="cell"><svg class="ic"><use href="#ybranch"/></svg><span class="car"></span></div>
        <div class="cell gl-1"><svg class="ic"><use href="#curvefn"/></svg><span class="car"></span></div>
        <div class="cell gl-1"><svg class="ic"><use href="#potato"/></svg><span class="car"></span></div>
        <div class="cell gl-1"><svg class="ic"><use href="#redx"/></svg></div>
      </div>
    </div>
    <div class="rb-name">Modify</div>
  </div>

  <div class="rb-group">
    <div class="rb-body d-flex g-grp">
      <div class="big-btn"><div class="big-ico"><svg class="ic18"><use href="#region"/></svg></div>Create<br>Region</div>
      <div class="mg">
        <svg class="ic"><use href="#sigma"/></svg>
        <svg class="ic"><use href="#s-box"/></svg>
        <svg class="ic"><use href="#target"/></svg>
        <div class="cell"><svg class="ic"><use href="#dots"/></svg><span class="car"></span></div>
        <div class="cell"><svg class="ic"><use href="#gridb"/></svg><span class="car"></span></div>
        <div class="cell"><svg class="ic"><use href="#bulb"/></svg><span class="car"></span></div>
      </div>
    </div>
    <div class="rb-name">Groups<span class="launcher"></span></div>
  </div>
</section>

<div class="view-title d-flex align-items-center">
  <span class="ms-1 d-inline-block bg-secondary ic8"></span>
  <span class="view-name gl-2">View 1, 2D Metric Design</span>
  <div class="ms-auto d-flex win-btns">
    <div class="win-btn"><i></i></div>
    <div class="win-btn"><i></i></div>
    <div class="win-btn win-x"><i></i></div>
  </div>
</div>
<div class="view-bar d-flex align-items-center">
  <svg class="ic"><use href="#view"/></svg><span class="car"></span>
  <svg class="ic gl-4"><use href="#ball"/></svg>
  <svg class="ic"><use href="#sun"/></svg><span class="car"></span>
  <svg class="ic gl-3"><use href="#broom"/></svg>
  <svg class="ic"><use href="#zoomg"/></svg>
  <svg class="ic"><use href="#zoomg"/></svg>
  <svg class="ic"><use href="#fit"/></svg>
  <svg class="ic"><use href="#spin"/></svg>
  <svg class="ic"><use href="#hand"/></svg>
  <svg class="ic gl-2"><use href="#prevv"/></svg>
  <svg class="ic"><use href="#nextv"/></svg>
  <svg class="ic gl-2"><use href="#twov"/></svg>
  <svg class="ic"><use href="#zoomx"/></svg>
  <svg class="ic"><use href="#twov"/></svg>
</div>

<main class="canvas-area">
  <div class="cross-v cv-a"></div>
  <div class="cross-v cv-b"></div>
  <div class="cross-h"></div>
  <div class="cursor-dot"></div>

  <svg class="triad" viewBox="0 0 60 66">
    <path d="M8 32V18H2L14.500 1 27 18H21V32z" fill="#0b7d12"/>
    <path d="M24 34H38V28L55 42 38 55V48H24z" fill="#6e0f0f"/>
    <circle cx="14.500" cy="42" r="6.500" fill="#1c1fa6"/>
    <text x="14" y="27" text-anchor="middle" font-size="17" fill="#b9d6b9" font-family="Liberation Sans, sans-serif">Y</text>
    <text x="35.500" y="47" text-anchor="middle" font-size="14" fill="#e6cfcf" font-family="Liberation Sans, sans-serif">X</text>
  </svg>

  <div class="sel-dialog">
    <div class="sel-head d-flex align-items-center">
      <svg class="ic"><use href="#d-icon"/></svg>
      <span class="sel-name gl-2">Element Selection</span>
      <svg class="ic8 ms-auto" viewBox="0 0 10 10"><path d="M1 5h8" stroke="#666"/></svg>
      <svg class="ic8 ms-3" viewBox="0 0 10 10"><rect x="1" y="1" width="8" height="8" fill="none" stroke="#ccc"/></svg>
      <svg class="ic8 ms-3" viewBox="0 0 10 10"><path d="M1 1l8 8M9 1 1 9" stroke="#555"/></svg>
    </div>
    <div class="sel-rows">
      <div class="sel-row d-flex align-items-center">
        <div class="sel-strip d-flex align-items-center">
          <span class="sel-on"><svg class="ic"><use href="#d-method"/></svg></span>
          <svg class="ic"><use href="#d-block"/></svg>
          <svg class="ic"><use href="#d-shape"/></svg>
          <svg class="ic"><use href="#d-circ"/></svg>
          <svg class="ic"><use href="#d-line"/></svg>
        </div>
        <svg class="ic12 sel-side"><use href="#d-stop"/></svg>
      </div>
      <div class="sel-row d-flex align-items-center">
        <div class="sel-strip d-flex align-items-center">
          <span class="sel-on"><svg class="ic"><use href="#d-cur"/></svg></span>
          <svg class="ic"><use href="#d-plus"/></svg>
          <svg class="ic"><use href="#d-minus"/></svg>
          <svg class="ic"><use href="#d-inv"/></svg>
          <svg class="ic"><use href="#d-all"/></svg>
        </div>
        <svg class="ic12 sel-side"><use href="#d-grey"/></svg>
        <span class="car sel-drop"></span>
      </div>
    </div>
  </div>
</main>

<div class="tool-bar d-flex align-items-center">
  <span class="grip"></span>
  <svg class="ic12"><use href="#greenb"/></svg>
  <span class="car gl-3"></span>
  <svg class="ic12 gl-3"><use href="#greyb"/></svg>
  <span class="car gl-3"></span>
  <svg class="ic13 gl-3"><use href="#cloudg"/></svg>
  <span class="car gl-2"></span>
  <div class="view-combo d-flex align-items-center">
    <svg class="ic"><use href="#twov"/></svg>2D Metric Design<span class="car ms-auto"></span>
  </div>
  <svg class="ic13 gl-3"><use href="#twov"/></svg>
  <div class="view-nums d-flex align-items-center">
    <span class="view-num on">1</span><span class="view-num">2</span><span class="view-num">3</span><span class="view-num">4</span><span class="view-num">5</span><span class="view-num">6</span><span class="view-num">7</span><span class="view-num">8</span>
  </div>
  <span class="snap-x"><svg class="ic15"><use href="#snapx"/></svg></span>
  <svg class="ic15"><use href="#t-step"/></svg>
  <span class="snap-on"><svg class="ic15"><use href="#t-dot"/></svg></span>
  <svg class="ic15"><use href="#t-line"/></svg>
  <svg class="ic15"><use href="#t-circ"/></svg>
  <svg class="ic12"><use href="#t-gear"/></svg>
  <svg class="ic12"><use href="#t-curve"/></svg>
  <svg class="ic15 gl-4"><use href="#t-x"/></svg>
  <svg class="ic15"><use href="#t-arc"/></svg>
  <svg class="ic13"><use href="#t-perp"/></svg>
  <span class="tb-sep gl-2"></span>
  <svg class="ic13 gl-2"><use href="#t-box"/></svg>
  <span class="tb-sep gl-2"></span>
  <span class="grip gl-1"></span>
  <span class="coord-label gl-6">X</span>
  <input class="form-control coord-input" type="text" value="6.806" readonly>
  <span class="tb-sep gl-3"></span>
  <span class="coord-label ms-2">Y</span>
  <input class="form-control coord-input" type="text" value="3.371" readonly>
  <span class="tb-rest ms-2"></span>
</div>

<footer class="status-bar d-flex align-items-center">
  <div class="st-cell st-msg">Element Selection &gt; Identify element to add to set</div>
  <div class="st-cell st-16"></div>
  <div class="st-cell st-wide"></div>
  <div class="st-cell st-15"><svg class="ic"><use href="#s-line"/></svg></div>
  <div class="st-cell st-16"><svg class="ic8"><use href="#s-lock"/></svg></div>
  <div class="st-cell st-def">Default</div>
  <div class="st-cell st-63"></div>
  <div class="st-cell st-16"></div>
  <div class="st-cell st-16"></div>
  <div class="st-cell st-16"></div>
  <div class="st-cell st-16"><svg class="ic"><use href="#s-sheet"/></svg></div>
  <div class="st-cell st-16"><svg class="ic"><use href="#s-tool"/></svg></div>
  <div class="st-cell st-16"></div>
  <div class="st-cell st-16"><svg class="ic"><use href="#s-book"/></svg></div>
  <div class="st-cell st-16"></div>
  <div class="st-cell st-16"><svg class="ic8"><use href="#s-sq"/></svg></div>
  <div class="flex-grow-1 d-flex justify-content-center"><svg class="ic"><use href="#s-globe"/></svg></div>
</footer>

</body>
</html>
